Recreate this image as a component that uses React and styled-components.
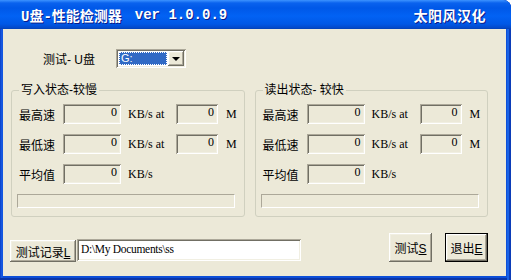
import React from 'react';
import styled, { createGlobalStyle } from 'styled-components';

const GlobalStyle = createGlobalStyle`
  html, body {
    margin: 0;
    padding: 0;
    background: #ffffff;
  }
  body {
    font-family: "Liberation Serif", "Noto Sans CJK SC", serif;
    font-size: 12px;
    color: #000;
  }
`;

const sunken = `
  box-shadow: inset 1px 1px #aca899, inset -1px -1px #ffffff,
    inset 2px 2px #716f64, inset -2px -2px #f1efe2;
`;

const raised = `
  box-shadow: inset -1px -1px #716f64, inset 1px 1px #ffffff,
    inset -2px -2px #aca899, inset 2px 2px #f1efe2;
`;

// Window frame
const Window = styled.div`
  width: 511px;
  height: 280px;
  box-sizing: border-box;
  display: flex;
  flex-direction: column;
  background: linear-gradient(to right, #0a3fc4 0px, #1a5ee8 2px, #0c4fd8 3px);
  border-top-right-radius: 8px;
  padding: 0 5px 4px 3px;
  box-shadow: inset -2px 0 #0b3cb8, inset -4px 0 #1862e6, inset 0 -2px #0a35a8;
`;

const TitleBar = styled.div`
  height: 29px;
  margin: 0 -5px 0 -3px;
  padding: 0 25px 0 21px;
  display: flex;
  align-items: center;
  border-top-right-radius: 8px;
  background: linear-gradient(
    to bottom,
    #3d93ff 0px,
    #0a62ee 3px,
    #0058e8 8px,
    #0262f4 16px,
    #0058e6 24px,
    #0348c8 28px,
    #0340b0 29px
  );
  color: #fff;
  font-weight: bold;
  font-size: 14px;
  text-shadow: 1px 1px #0a1c8a;
`;

const TitleText = styled.span`
  font-family: "Liberation Mono", "Noto Sans CJK SC", monospace;
  white-space: pre;
  margin-left: ${(p) => p.$ml || 0}px;
`;

const TitleRight = styled.span`
  margin-left: auto;
  font-family: "Noto Sans CJK SC", sans-serif;
  letter-spacing: 0.5px;
`;

const Content = styled.div`
  flex: 1;
  background: #ece9d8;
  display: flex;
  flex-direction: column;
  padding: 20px 18px 0 8px;
`;

// Drive selector
const TopRow = styled.div`
  display: flex;
  align-items: center;
  height: 19px;
  padding-left: 32px;
`;

const TopLabel = styled.span`
  width: 73px;
  font-family: "Liberation Sans", "Noto Sans CJK SC", sans-serif;
`;

const Combo = styled.div`
  width: 70px;
  height: 19px;
  box-sizing: border-box;
  background: #fff;
  display: flex;
  align-items: center;
  padding: 2px;
  ${sunken}
`;

const ComboValue = styled.div`
  flex: 1;
  height: 13px;
  margin: 0 1px;
  background: #316ac5;
  color: #fff;
  font-family: "Liberation Sans", sans-serif;
  font-size: 11px;
  line-height: 12px;
  padding-left: 2px;
  outline: 1px dotted #ffffff;
  outline-offset: -1px;
`;

const ComboArrow = styled.div`
  width: 16px;
  height: 15px;
  background: #ece9d8;
  display: flex;
  align-items: center;
  justify-content: center;
  ${raised}

  &::after {
    content: "";
    border-left: 4px solid transparent;
    border-right: 4px solid transparent;
    border-top: 4px solid #000;
  }
`;

// Group boxes
const Groups = styled.div`
  display: flex;
  gap: 10px;
  margin-top: 14px;
`;

const Group = styled.fieldset`
  margin: 0;
  width: 238px;
  box-sizing: border-box;
  border: 1px solid #d0d0bf;
  border-radius: 3px;
  padding: 5px 0 8px 7px;
  display: flex;
  flex-direction: column;
  gap: 10px;
`;

const Legend = styled.legend`
  padding: 0 2px;
  line-height: 17px;
  height: 17px;
  font-family: "Liberation Sans", "Noto Sans CJK SC", sans-serif;
`;

const Row = styled.div`
  display: flex;
  align-items: center;
  height: 20px;
`;

const RowLabel = styled.span`
  width: 44px;
  font-family: "Noto Sans CJK SC", sans-serif;
`;

const ValueBox = styled.div`
  width: ${(p) => p.$w}px;
  height: 20px;
  box-sizing: border-box;
  background: #ece9d8;
  text-align: right;
  padding: 1px 4px 0 0;
  line-height: 15px;
  ${sunken}
`;

const Unit = styled.span`
  width: ${(p) => (p.$w ? `${p.$w}px` : 'auto')};
  margin-left: ${(p) => p.$ml}px;
  line-height: 20px;
  font-family: "Liberation Serif", serif;
`;

const Progress = styled.div`
  width: 218px;
  height: 14px;
  box-sizing: border-box;
  margin-left: -2px;
  border: 1px solid;
  border-color: #aca899 #ffffff #ffffff #aca899;
`;

// Bottom bar
const BottomRow = styled.div`
  display: flex;
  align-items: flex-end;
  margin-top: 16px;
  margin-left: -1px;
  height: 29px;
`;

const Button = styled.button`
  box-sizing: border-box;
  width: ${(p) => p.$w}px;
  height: ${(p) => p.$h}px;
  margin: 0;
  margin-left: ${(p) => p.$ml || 0}px;
  padding: 0;
  background: #ece9d8;
  border: ${(p) => (p.$default ? '1px solid #000' : 'none')};
  font-family: "Liberation Sans", "Noto Sans CJK SC", sans-serif;
  font-size: 12px;
  color: #000;
  ${raised}
`;

const Spacer = styled.div`
  flex: 1;
`;

const PathField = styled.div`
  width: 224px;
  height: 22px;
  box-sizing: border-box;
  margin: 0 0 1px 1px;
  background: #fff;
  padding: 2px 4px;
  font-size: 11.5px;
  line-height: 16px;
  letter-spacing: -0.3px;
  ${sunken}
`;

const StatGroup = ({ title }) => (
  <Group>
    <Legend>{title}</Legend>
    <Row>
      <RowLabel>最高速</RowLabel>
      <ValueBox $w={58}>0</ValueBox>
      <Unit $ml={7} $w={48}>KB/s at</Unit>
      <ValueBox $w={42}>0</ValueBox>
      <Unit $ml={8}>M</Unit>
    </Row>
    <Row>
      <RowLabel>最低速</RowLabel>
      <ValueBox $w={58}>0</ValueBox>
      <Unit $ml={7} $w={48}>KB/s at</Unit>
      <ValueBox $w={42}>0</ValueBox>
      <Unit $ml={8}>M</Unit>
    </Row>
    <Row>
      <RowLabel>平均值</RowLabel>
      <ValueBox $w={58}>0</ValueBox>
      <Unit $ml={7}>KB/s</Unit>
    </Row>
    <Progress />
  </Group>
);

export default function App() {
  return (
    <>
      <GlobalStyle />
      <Window>
        <TitleBar>
          <TitleText>U盘-性能检测器</TitleText>
          <TitleText $ml={13}>ver 1.0.0.9</TitleText>
          <TitleRight>太阳风汉化</TitleRight>
        </TitleBar>
        <Content>
          <TopRow>
            <TopLabel>测试- U盘</TopLabel>
            <Combo>
              <ComboValue>G:</ComboValue>
              <ComboArrow />
            </Combo>
          </TopRow>
          <Groups>
            <StatGroup title="写入状态-较慢" />
            <StatGroup title="读出状态- 较快" />
          </Groups>
          <BottomRow>
            <Button $w={66} $h={22}>
              测试记录<u>L</u>
            </Button>
            <PathField>D:\My Documents\ss</PathField>
            <Spacer />
            <Button $w={43} $h={29}>
              测试<u>S</u>
            </Button>
            <Button $w={43} $h={29} $ml={13} $default>
              退出<u>E</u>
            </Button>
          </BottomRow>
        </Content>
      </Window>
    </>
  );
}
